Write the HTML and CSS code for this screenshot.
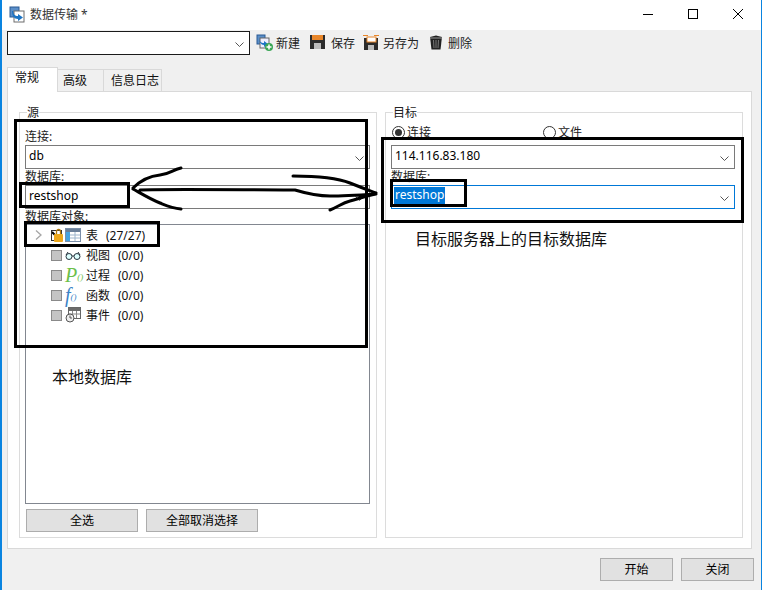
FILE: index.html
```html
<!DOCTYPE html>
<html lang="zh">
<head>
<meta charset="utf-8">
<title>数据传输</title>
<link rel="stylesheet" href="styles.css">
</head>
<body>
<div class="window">
  <header class="titlebar">
    <svg class="app-icon" width="18" height="18" viewBox="0 0 18 18"><rect x="1" y="1" width="9" height="10" fill="#5b8fc9" stroke="#2a5a94"/><rect x="5" y="5" width="10" height="11" fill="#fff" stroke="#6d6d6d"/><path d="M4 5c0 3 2 5 5 5V8l5 3.500-5 3.500v-2c-4 0-6-3-6-8z" fill="#1c74c4"/></svg>
    <span class="title-text">数据传输 *</span>
    <div class="winctl">
      <svg width="12" height="12" viewBox="0 0 12 12"><path d="M1 6.500h10" stroke="#000" fill="none"/></svg>
      <svg width="12" height="12" viewBox="0 0 12 12"><rect x="1.500" y="1.500" width="9" height="9" stroke="#000" fill="none"/></svg>
      <svg width="12" height="12" viewBox="0 0 12 12"><path d="M1 1l10 10M11 1L1 11" stroke="#000" fill="none"/></svg>
    </div>
  </header>

  <div class="body">
    <div class="toolbar">
      <div class="combo profile"><svg class="chev" width="9" height="5" viewBox="0 0 9 5"><path d="M.5.500l4 4 4-4" stroke="#555" fill="none"/></svg></div>
      <div class="tool tool-new">
        <svg width="18" height="18" viewBox="0 0 18 18"><rect x="1" y="1" width="8" height="9" fill="#5b8fc9" stroke="#2a5a94"/><rect x="4" y="4" width="9" height="10" fill="#eef" stroke="#666"/><path d="M3 4c0 3 2 5 5 5V7l4 3-4 3v-2c-3 0-5-3-5-7z" fill="#1c74c4"/><circle cx="13" cy="13" r="4" fill="#3aa655"/><path d="M13 10.500v5M10.500 13h5" stroke="#fff" stroke-width="1.500"/></svg>
        <span>新建</span>
      </div>
      <div class="tool tool-save">
        <svg width="15" height="15" viewBox="0 0 15 15"><rect x="0" y="0" width="15" height="14" fill="#2b2b2b"/><rect x="2" y="0" width="11" height="5" fill="#e8862a"/><rect x="4" y="8" width="7" height="6" fill="#bcbcbc"/></svg>
        <span>保存</span>
      </div>
      <div class="tool tool-saveas">
        <svg width="16" height="16" viewBox="0 0 16 16"><rect x="1" y="3" width="14" height="12" fill="#2b2b2b"/><rect x="4" y="2" width="9" height="5" fill="#fff" stroke="#e8862a"/><rect x="5" y="10" width="6" height="5" fill="#bcbcbc"/><path d="M0 .500h5M11 .500h5" stroke="#e8862a"/></svg>
        <span>另存为</span>
      </div>
      <div class="tool tool-delete">
        <svg width="14" height="15" viewBox="0 0 14 15"><path d="M1 2l6-1.500L13 2l-1.500 12.500h-9z" fill="#222"/><path d="M4.500 5l.5 8M7 5v8M9.500 5L9 13" stroke="#777"/><path d="M1 3h12" stroke="#999"/></svg>
        <span>删除</span>
      </div>
    </div>

    <div class="tabs">
      <div class="tab active">常规</div>
      <div class="tab second">高级</div>
      <div class="tab third">信息日志</div>
    </div>

    <div class="panel">
      <section class="group">
        <div class="legend">源</div>
        <div class="source-fields">
          <div class="label first">连接:</div>
          <div class="combo">db<svg class="chev" width="9" height="5" viewBox="0 0 9 5"><path d="M.5.500l4 4 4-4" stroke="#555" fill="none"/></svg></div>
          <div class="label">数据库:</div>
          <div class="combo">restshop<svg class="chev" width="9" height="5" viewBox="0 0 9 5"><path d="M.5.500l4 4 4-4" stroke="#555" fill="none"/></svg></div>
          <div class="label objects">数据库对象:</div>
          <div class="tree">
            <div class="row">
              <svg class="expander" width="7" height="10" viewBox="0 0 7 10"><path d="M1 .500l5 4.500-5 4.500" stroke="#a6a6a6" stroke-width="1.300" fill="none"/></svg>
              <span class="check on"></span>
              <svg class="tick" width="7" height="7" viewBox="0 0 7 7"><path d="M0 1l5 5" stroke="#000" stroke-width="2"/></svg>
              <svg class="lock" width="9" height="14" viewBox="0 0 9 14"><path d="M2.500 6V3.500a2 2 0 0 1 4 0V6" fill="none" stroke="#b07a10" stroke-width="1.300"/><rect x="0" y="6" width="9" height="8" rx="1" fill="#eda81c"/></svg>
              <svg class="icon" width="16" height="14" viewBox="0 0 16 14"><rect x=".5" y=".5" width="15" height="13" fill="#fff" stroke="#7a8ea8"/><rect x="1" y="1" width="14" height="3" fill="#6a7f99"/><rect x="1" y="4" width="4" height="9" fill="#45a3e0"/><path d="M5 7h10M5 10h10M10 4v9" stroke="#9cb4cc"/></svg>
              <span class="name">表</span><span class="count">(27/27)</span>
            </div>
            <div class="row">
              <span class="check"></span>
              <svg class="icon" width="16" height="14" viewBox="0 0 16 14"><circle cx="4" cy="8.500" r="3" fill="#dff" stroke="#26343f"/><circle cx="12" cy="8.500" r="3" fill="#dff" stroke="#26343f"/><path d="M7 8h2M1 7l2-3M15 7l-2-3" stroke="#26343f"/></svg>
              <span class="name">视图</span><span class="count">(0/0)</span>
            </div>
            <div class="row">
              <span class="check"></span>
              <span class="icon glyph proc"><i>P</i><small>()</small></span>
              <span class="name">过程</span><span class="count">(0/0)</span>
            </div>
            <div class="row">
              <span class="check"></span>
              <span class="icon glyph func"><i>f</i><small>()</small></span>
              <span class="name">函数</span><span class="count">(0/0)</span>
            </div>
            <div class="row">
              <span class="check"></span>
              <svg class="icon" width="16" height="16" viewBox="0 0 16 16"><rect x="3.500" y=".5" width="12" height="11" fill="#fff" stroke="#666"/><rect x="4" y="1" width="11" height="3" fill="#6b6b6b"/><path d="M4 7h11M7.500 4v7M11.500 4v7" stroke="#888"/><circle cx="5" cy="11" r="4" fill="#eee" stroke="#555"/><path d="M5 8.500V11h2" stroke="#555" fill="none"/></svg>
              <span class="name">事件</span><span class="count">(0/0)</span>
            </div>
          </div>
          <div class="actions">
            <button class="btn wide" type="button">全选</button>
            <button class="btn wide" type="button">全部取消选择</button>
          </div>
        </div>
      </section>

      <section class="group">
        <div class="legend">目标</div>
        <div class="target-fields">
          <div class="radios">
            <span class="radio-item"><span class="radio on"></span>连接</span>
            <span class="radio-item"><span class="radio"></span>文件</span>
          </div>
          <div class="combo">114.116.83.180<svg class="chev" width="9" height="5" viewBox="0 0 9 5"><path d="M.5.500l4 4 4-4" stroke="#555" fill="none"/></svg></div>
          <div class="label">数据库:</div>
          <div class="combo focus"><span class="selected">restshop</span><svg class="chev" width="9" height="5" viewBox="0 0 9 5"><path d="M.5.500l4 4 4-4" stroke="#555" fill="none"/></svg></div>
        </div>
      </section>
    </div>

    <footer class="footer">
      <button class="btn" type="button">开始</button>
      <button class="btn" type="button">关闭</button>
    </footer>
  </div>

  <div class="mark m1"></div>
  <div class="mark m2"></div>
  <div class="mark m3"></div>
  <div class="mark m4"></div>
  <div class="mark m5"></div>
  <div class="note n1">本地数据库</div>
  <div class="note n2">目标服务器上的目标数据库</div>
  <svg class="scribble" width="765" height="590" viewBox="0 0 765 590">
    <path d="M133 188C140 181 150 176 160 175S172 170 181 168M133 189C142 194 150 199 160 203S172 208 181 209M140 190C170 189 250 190 295 190C305 193 318 196 330 196S360 195 376 194M293 176C310 176 335 177 350 183S368 190 376 193M330 210C338 207 342 203 350 201S365 196 376 194" fill="none" stroke="#000" stroke-width="3" stroke-linecap="round" stroke-linejoin="round"/>
  </svg>
</div>
</body>
</html>
```
FILE: styles.css
```css
* { box-sizing: border-box; }
html, body { margin: 0; padding: 0; background: #fff; }
body {
  font-family: "Noto Sans", "Noto Sans CJK SC", sans-serif;
  font-size: 12px;
  color: #000;
}
.window {
  position: relative;
  width: 762px;
  height: 590px;
  border-left: 2px solid #0a84e0;
  border-right: 1px solid #0a84e0;
  display: flex;
  flex-direction: column;
  overflow: hidden;
  background: #f0f0f0;
}
.titlebar {
  height: 30px;
  flex: none;
  background: #fff;
  display: flex;
  align-items: center;
  padding-left: 7px;
}
.app-icon { margin-right: 3px; }
.title-text { color: #333; line-height: 16px; padding-bottom: 1px; }
.winctl {
  margin-left: auto;
  display: flex;
  gap: 33px;
  padding: 0 17px 2px 0;
}
.body {
  flex: 1;
  display: flex;
  flex-direction: column;
  padding: 0 7px 0 5px;
}
.toolbar {
  display: flex;
  align-items: center;
  height: 25px;
}
.combo {
  position: relative;
  height: 24px;
  line-height: 20px;
  background: #fff;
  border: 1px solid #7a7a7a;
  padding-left: 3px;
  color: #000;
  flex: none;
}
.chev { position: absolute; right: 5px; top: 10px; }
.combo.profile { width: 243px; border-color: #1a1a1a; margin-right: 6px; }
.tool { display: flex; align-items: center; color: #222; flex: none; }
.tool span { line-height: 16px; padding-top: 2px; }
.tool-new { gap: 2px; margin-right: 10px; }
.tool-save { gap: 6px; margin-right: 8px; }
.tool-saveas { gap: 4px; margin-right: 10px; }
.tool-delete { gap: 5px; }
.tabs {
  display: flex;
  align-items: flex-end;
  height: 24px;
  margin-top: 12px;
  position: relative;
  z-index: 1;
}
.tab {
  flex: none;
  height: 22px;
  line-height: 21px;
  background: #f0f0f0;
  border: 1px solid #d9d9d9;
  border-left: 0;
  border-bottom: 0;
  white-space: nowrap;
  color: #111;
}
.tab.second { width: 46px; padding-left: 5px; }
.tab.third { width: 58px; padding-left: 7px; }
.tab.active {
  height: 25px;
  width: 51px;
  line-height: 20px;
  margin-bottom: -1px;
  background: #fff;
  border-left: 1px solid #d9d9d9;
  padding: 0 0 0 7px;
}
.panel {
  height: 458px;
  width: 745px;
  flex: none;
  background: #fff;
  border: 1px solid #d9d9d9;
  display: grid;
  grid-template-columns: 358px 358px;
  column-gap: 8px;
  padding: 20px 8px 10px 11px;
}
.group {
  border: 1px solid #dcdcdc;
  display: flex;
  flex-direction: column;
  min-height: 0;
}
.legend {
  align-self: flex-start;
  margin: -7px 0 0 7px;
  background: #fff;
  height: 14px;
  line-height: 14px;
  color: #222;
}
.source-fields { display: flex; flex-direction: column; padding: 0 6px 0 5px; }
.label { height: 16px; line-height: 15px; color: #222; }
.label.first { margin-top: 9px; }
.label.objects { margin-top: 1px; height: 14px; line-height: 13px; }
.tree {
  height: 280px;
  background: #fff;
  border: 1px solid #828790;
}
.row {
  position: relative;
  height: 20px;
  display: flex;
  align-items: center;
  padding-left: 25px;
}
.expander { position: absolute; left: 9px; top: 5px; }
.check {
  width: 11px;
  height: 11px;
  flex: none;
  background: #c4c4c4;
  border: 1px solid #8a8a8a;
}
.check.on { background: #fff; border-color: #333; }
.tick { position: absolute; left: 26px; top: 6px; }
.lock { position: absolute; left: 28px; top: 3px; }
.icon { width: 16px; flex: none; margin-left: 3px; }
.glyph {
  height: 16px;
  display: flex;
  align-items: flex-end;
  font-family: "Liberation Serif", serif;
  line-height: 16px;
}
.glyph i { font-size: 20px; line-height: 16px; }
.glyph small { font-size: 9px; line-height: 12px; font-style: italic; }
.proc { color: #6cc04a; }
.func { color: #3d83c6; }
.name { margin-left: 5px; color: #111; }
.count { margin-left: 8px; color: #111; }
.actions { display: flex; gap: 8px; padding: 5px 0 0 1px; }
.btn {
  width: 73px;
  height: 23px;
  padding: 0;
  background: #e1e1e1;
  border: 1px solid #adadad;
  font: inherit;
  color: #000;
  line-height: 20px;
}
.btn.wide { width: 112px; }
.target-fields { display: flex; flex-direction: column; padding: 0 7px 0 5px; }
.radios { display: flex; height: 25px; padding-top: 4px; }
.radio-item { width: 151px; display: flex; align-items: center; gap: 2px; height: 16px; color: #222; }
.radio {
  width: 13px;
  height: 13px;
  border-radius: 50%;
  border: 1px solid #333;
  background: #fff;
  position: relative;
  margin-left: 1px;
}
.radio.on::after {
  content: "";
  position: absolute;
  left: 2px;
  top: 2px;
  width: 7px;
  height: 7px;
  border-radius: 50%;
  background: #333;
}
.combo.focus { border-color: #0078d7; }
.selected { background: #0078d7; color: #fff; display: inline-block; height: 17px; line-height: 16px; padding: 0 1px; margin-left: -1px; vertical-align: 1px; }
.footer {
  display: flex;
  justify-content: flex-end;
  gap: 8px;
  padding: 9px 0 0;
}
.mark { position: absolute; border: 3px solid #000; pointer-events: none; }
.m1 { left: 12px; top: 119px; width: 354px; height: 229px; }
.m2 { left: 17px; top: 182px; width: 111px; height: 26px; }
.m3 { left: 22px; top: 221px; width: 136px; height: 26px; }
.m4 { left: 379px; top: 137px; width: 363px; height: 86px; }
.m5 { left: 388px; top: 179px; width: 77px; height: 28px; }
.note { position: absolute; font-size: 16px; line-height: 20px; color: #111; white-space: nowrap; }
.n1 { left: 50px; top: 367px; }
.n2 { left: 413px; top: 229px; }
.scribble { position: absolute; left: -2px; top: 0; pointer-events: none; }
```
